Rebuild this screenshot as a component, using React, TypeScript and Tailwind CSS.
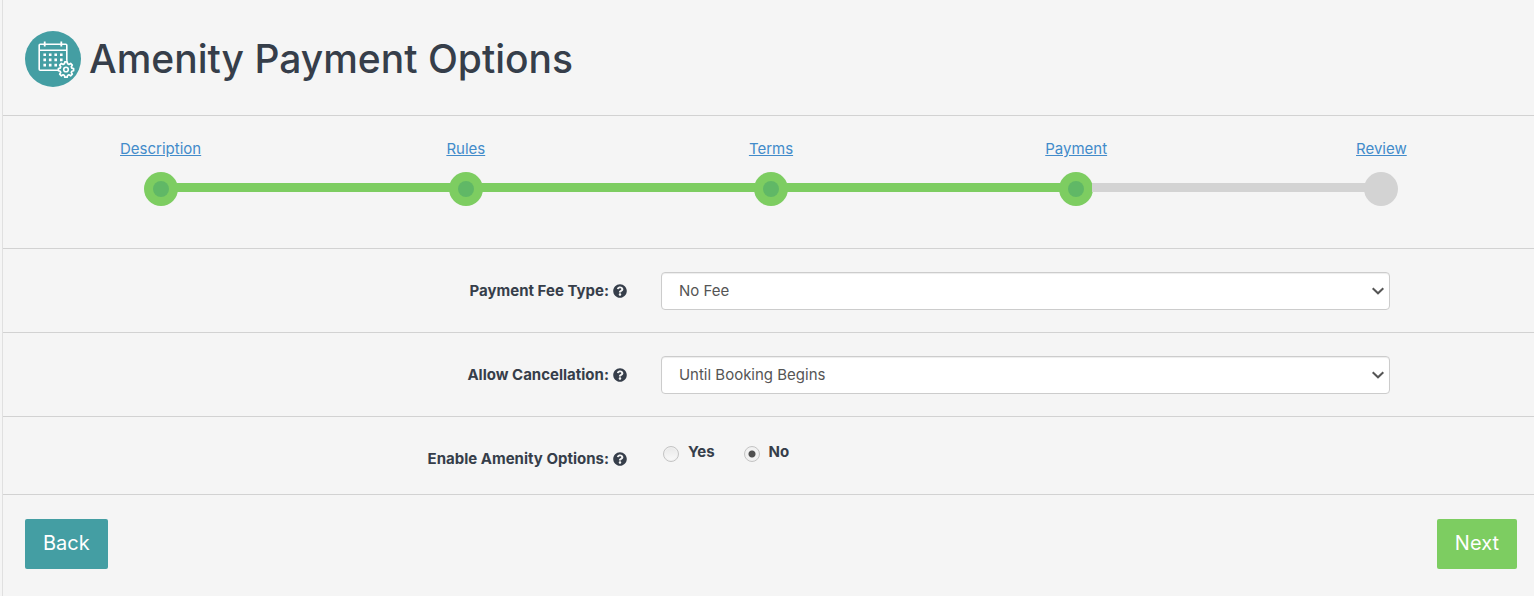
import { useState } from "react";
import type { ReactNode } from "react";
import { FaQuestionCircle } from "react-icons/fa";

const steps = [
  { name: "Description", done: true },
  { name: "Rules", done: true },
  { name: "Terms", done: true },
  { name: "Payment", done: true },
  { name: "Review", done: false },
];

const AmenityIcon = () => (
  <svg viewBox="0 0 56 56" className="size-14 shrink-0" fill="none" stroke="#fff" aria-hidden="true">
    <circle cx="28" cy="28" r="28" fill="#449ea3" stroke="none" />
    <path d="M34 39.3H15.2a1 1 0 0 1-1-1V14.2a1 1 0 0 1 1-1h25.6a1 1 0 0 1 1 1V31M14.2 19.2h27.6" strokeWidth="1.6" />
    <path d="M19.7 10.6v5M36.3 10.6v5" strokeWidth="1.8" />
    <path
      d="M19.7 22.4v13M25.2 22.4v13M30.7 22.4v13M36.3 22.4v8"
      strokeWidth="2.6"
      strokeDasharray="2.6 2.6"
    />
    <circle cx="41" cy="38" r="8.2" fill="#449ea3" stroke="none" />
    <path
      d="M39.8 30.9h2.4l.4 1.9 1.3.6 1.7-1 1.7 1.7-1 1.7.5 1.3 1.8.4v2.2l-1.8.5-.5 1.3 1 1.6-1.7 1.7-1.7-1-1.3.6-.4 1.8h-2.4l-.4-1.8-1.3-.6-1.7 1-1.7-1.7 1-1.6-.5-1.3-1.8-.5v-2.2l1.8-.4.5-1.3-1-1.7 1.7-1.7 1.7 1 1.3-.6z"
      strokeWidth="1.7"
      strokeLinejoin="round"
    />
    <circle cx="41" cy="38.5" r="2.3" strokeWidth="1.6" />
  </svg>
);

const Help = () => (
  <button type="button" aria-label="Help" className="ml-1 align-[-2px]">
    <FaQuestionCircle size={14} />
  </button>
);

const Steps = () => (
  <ol className="grid grid-cols-5 pl-[5px] pt-[21px] pb-[42px] border-b border-[#d2d2d2]">
    {steps.map((step, i) => {
      const next = steps[i + 1];
      return (
        <li key={step.name} className="flex flex-col items-center">
          <a href="#" className="text-[15px] leading-6 text-[#428bca] underline">
            {step.name}
          </a>
          <div className="flex w-full items-start mt-[11px]">
            <span
              className={`mt-[11px] h-[9px] flex-1 ${i === 0 ? "bg-transparent" : step.done ? "bg-[#7dcd61]" : "bg-[#d3d3d3]"}`}
            />
            <span
              className={`-mx-px flex size-[34px] items-center justify-center rounded-full ${step.done ? "bg-[#7dcd61]" : "bg-[#d3d3d3]"}`}
            >
              {step.done && <span className="size-4 rounded-full bg-[#60b866]" />}
            </span>
            <span
              className={`mt-[11px] h-[9px] flex-1 ${!next ? "bg-transparent" : next.done ? "bg-[#7dcd61]" : "bg-[#d3d3d3]"}`}
            />
          </div>
        </li>
      );
    })}
  </ol>
);

const SelectRow = ({ id, label, options }: { id: string; label: string; options: string[] }) => (
  <div className="grid grid-cols-12 border-b border-[#d2d2d2] pt-[23px] pb-[22px]">
    <div className="col-span-5 pr-[14px] pt-[7px] text-right text-[15px] leading-6 font-bold">
      <label htmlFor={id}>{label}</label>
      <Help />
    </div>
    <div className="col-span-6 grid pl-5 pr-4">
      <select
        id={id}
        className="col-start-1 row-start-1 h-[38px] w-full appearance-none rounded border border-[#ccc] bg-white px-[17px] pt-px text-[15px] text-[#555] shadow-[inset_0_1px_1px_rgba(0,0,0,0.075)]"
      >
        {options.map((option) => (
          <option key={option}>{option}</option>
        ))}
      </select>
      <svg
        viewBox="0 0 12 8"
        className="pointer-events-none col-start-1 row-start-1 mr-1.5 h-2 w-3 self-center justify-self-end"
        fill="none"
        stroke="#555"
        strokeWidth="2"
        aria-hidden="true"
      >
        <path d="M.7 1.2 6 6.3l5.3-5.1" />
      </svg>
    </div>
  </div>
);

const Radio = ({
  checked,
  onChange,
  children,
}: {
  checked: boolean;
  onChange: () => void;
  children: ReactNode;
}) => (
  <label className="flex items-start gap-[9px] text-[15px] leading-6 font-bold">
    <input
      type="radio"
      name="amenityOptions"
      checked={checked}
      onChange={onChange}
      className="mt-1.5 size-4 appearance-none rounded-full border border-[#c4c4c4] bg-linear-to-b from-[#e8e8e8] to-[#fafafa] shadow-[inset_0_0_0_1px_#f0f0f0] checked:bg-[radial-gradient(circle,#505050_3px,#f2f2f2_4px)]"
    />
    {children}
  </label>
);

const App = () => {
  const [enabled, setEnabled] = useState(false);

  return (
    <div className="min-h-screen bg-[#f5f5f5] pl-0.5 font-['Inter','Open_Sans',sans-serif] text-[#363e4a]">
      <main className="min-h-screen border-l border-[#e0e0e0]">
        <header className="flex items-center gap-2 border-b border-[#d2d2d2] pl-[22px] pt-[31px] pb-7">
          <AmenityIcon />
          <h1 className="text-[39px] leading-14 font-medium">Amenity Payment Options</h1>
        </header>
        <Steps />
        <form onSubmit={(e) => e.preventDefault()}>
          <SelectRow id="feeType" label="Payment Fee Type:" options={["No Fee", "Flat Fee", "Hourly Fee"]} />
          <SelectRow id="cancellation" label="Allow Cancellation:" options={["Until Booking Begins", "Never"]} />
          <fieldset
            aria-labelledby="amenityOptionsLabel"
            className="grid grid-cols-12 border-b border-[#d2d2d2] pt-[23px] pb-[23px]"
          >
            <div className="col-span-5 pr-[14px] pt-[7px] text-right text-[15px] leading-6 font-bold">
              <span id="amenityOptionsLabel">Enable Amenity Options:</span>
              <Help />
            </div>
            <div className="col-span-6 flex gap-[29px] pl-[22px]">
              <Radio checked={enabled} onChange={() => setEnabled(true)}>
                Yes
              </Radio>
              <Radio checked={!enabled} onChange={() => setEnabled(false)}>
                No
              </Radio>
            </div>
          </fieldset>
          <div className="flex justify-between pl-[22px] pr-[17px] py-6">
            <button type="button" className="h-[50px] rounded-xs bg-[#449ea3] px-[18px] pb-0.5 text-xl text-white">
              Back
            </button>
            <button type="submit" className="h-[50px] rounded-xs bg-[#7dcd61] px-[18px] pb-0.5 text-xl text-white">
              Next
            </button>
          </div>
        </form>
      </main>
    </div>
  );
};

export default App;
